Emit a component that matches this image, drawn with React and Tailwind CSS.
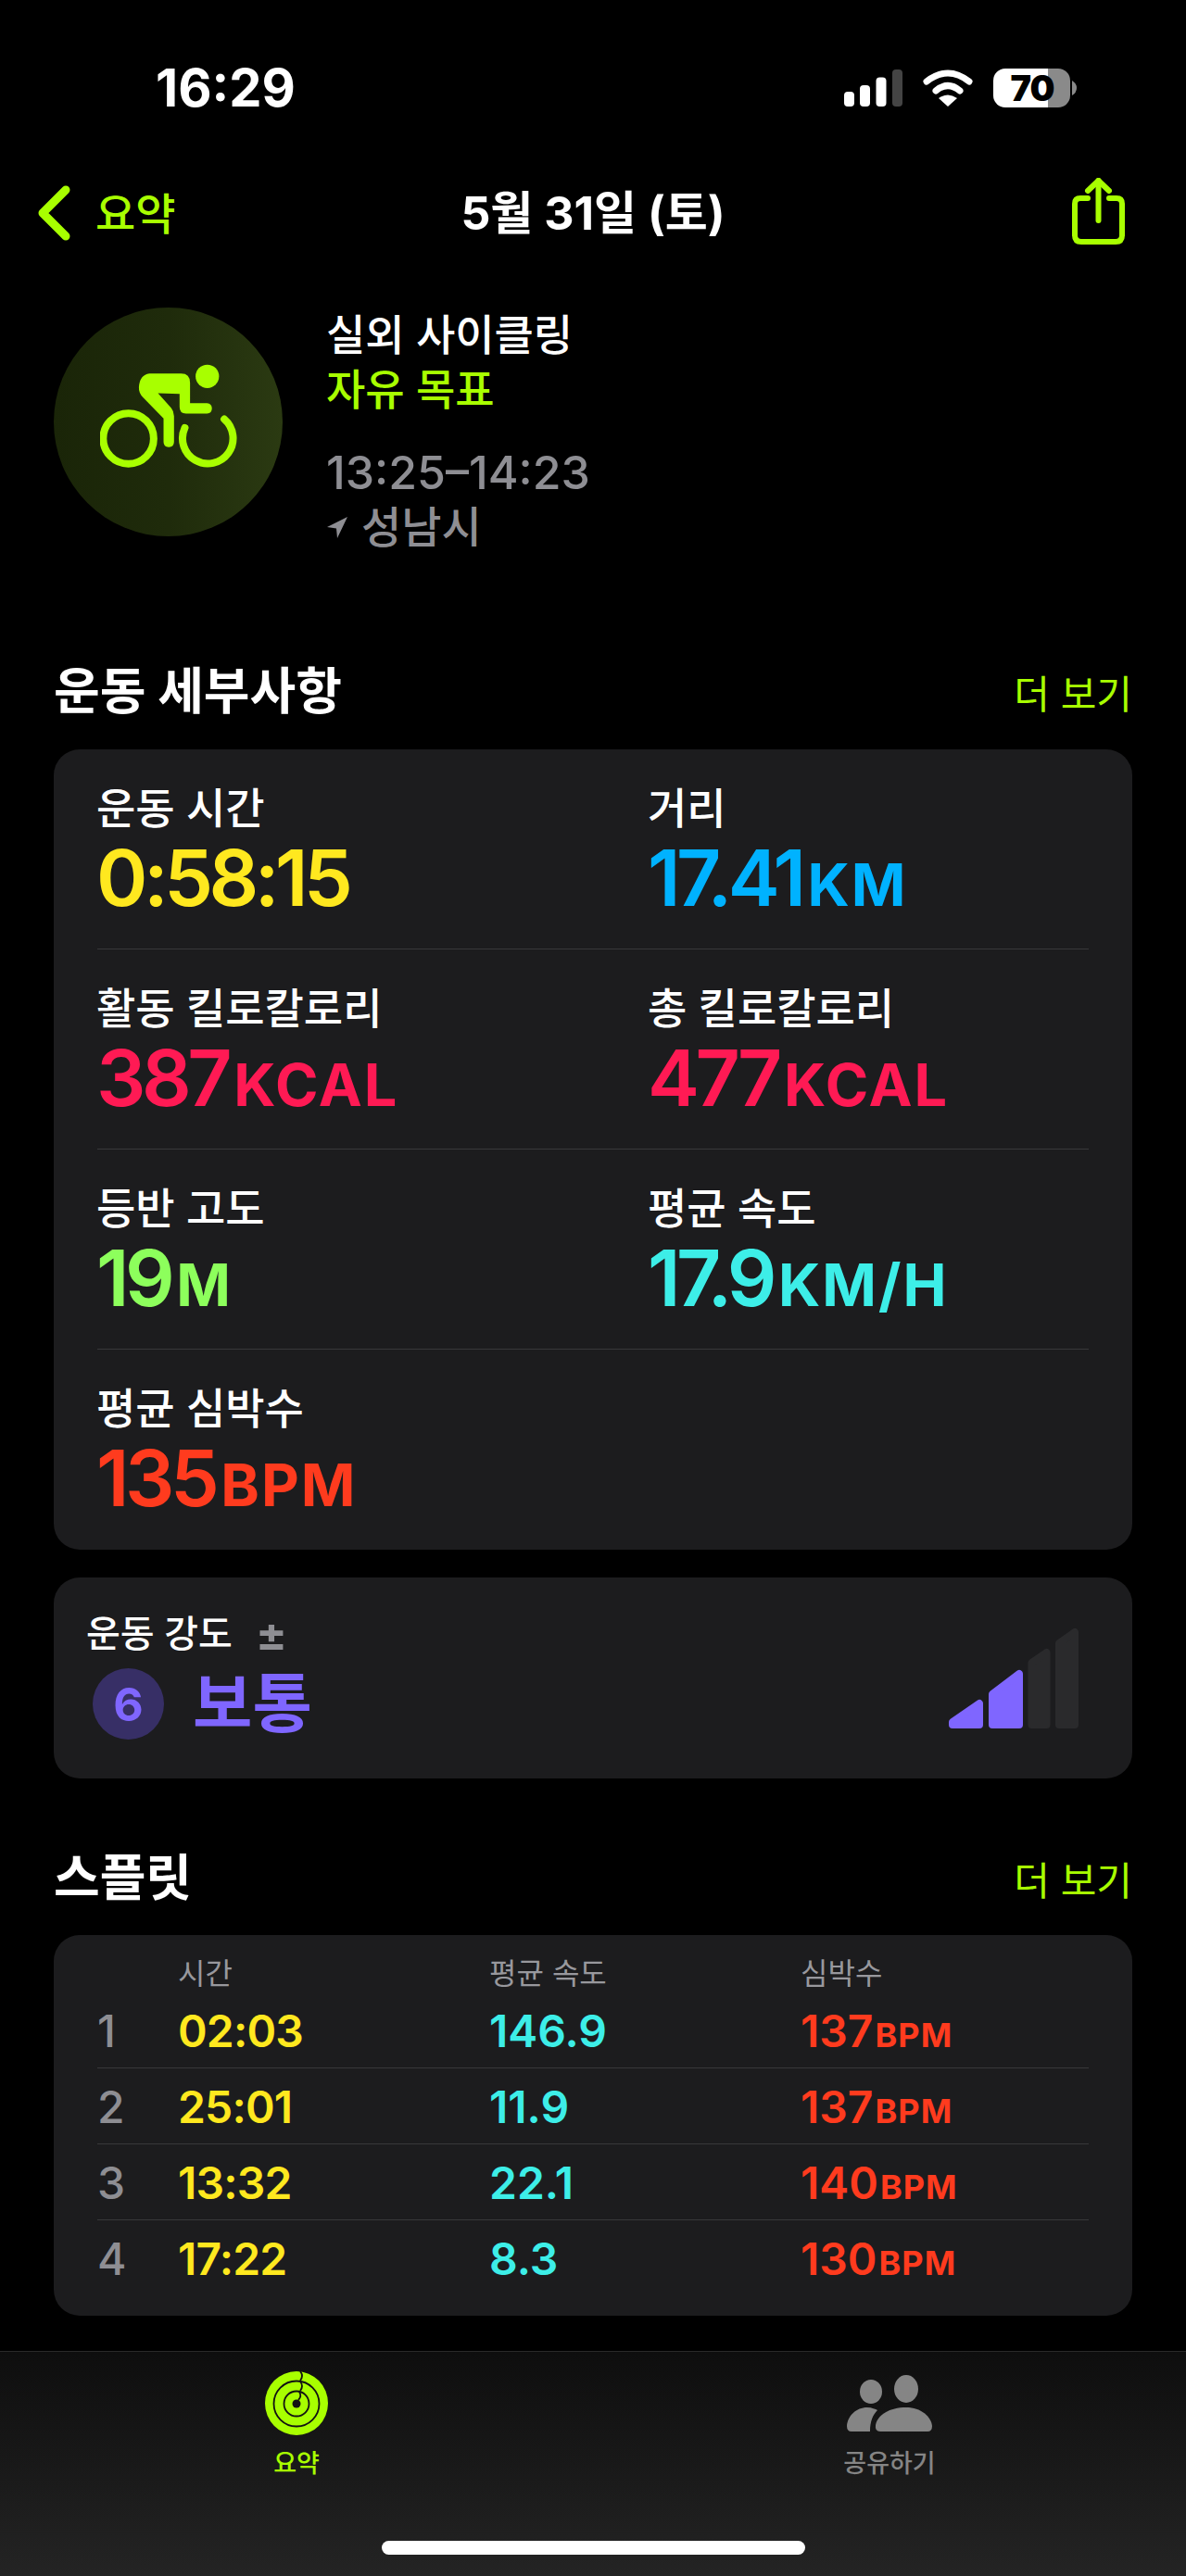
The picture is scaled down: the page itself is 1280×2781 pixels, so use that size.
import React from "react";

const LIME = "text-[#a8ff00]";

const rows = [
  [
    { label: "운동 시간", value: "0:58:15", unit: "", color: "text-[#ffe81f]" },
    { label: "거리", value: "17.41", unit: "KM", color: "text-[#00b2ff]" },
  ],
  [
    { label: "활동 킬로칼로리", value: "387", unit: "KCAL", color: "text-[#ff1a54]" },
    { label: "총 킬로칼로리", value: "477", unit: "KCAL", color: "text-[#ff1a54]" },
  ],
  [
    { label: "등반 고도", value: "19", unit: "M", color: "text-[#8dff5c]" },
    { label: "평균 속도", value: "17.9", unit: "KM/H", color: "text-[#3deee8]" },
  ],
  [{ label: "평균 심박수", value: "135", unit: "BPM", color: "text-[#ff3b1e]" }],
];

const splits = [
  ["1", "02:03", "146.9", "137"],
  ["2", "25:01", "11.9", "137"],
  ["3", "13:32", "22.1", "140"],
  ["4", "17:22", "8.3", "130"],
];

const Signal = () => (
  <svg width="63" height="40" viewBox="0 0 63 40">
    <rect x="0" y="24" width="11" height="16" rx="4" fill="#fff" />
    <rect x="17" y="17" width="11" height="23" rx="4" fill="#fff" />
    <rect x="34.5" y="8.5" width="11" height="31.5" rx="4" fill="#fff" />
    <rect x="52" y="0" width="11" height="40" rx="4" fill="#444" />
  </svg>
);

const Wifi = () => (
  <svg width="54" height="40" viewBox="0 0 54 40">
    <path d="M4 13 Q27 -5 50 13" fill="none" stroke="#fff" strokeWidth="7" strokeLinecap="round" />
    <path d="M14 23 Q27 12 40 23" fill="none" stroke="#fff" strokeWidth="7" strokeLinecap="round" />
    <path d="M27 40 L17 31 Q27 24 37 31 Z" fill="#fff" />
  </svg>
);

const Battery = () => (
  <div className="flex items-center gap-[2px]">
    <div className="relative w-[83px] h-[42px] rounded-[13px] bg-[linear-gradient(to_right,#fff_59px,#8a8a8a_59px)]">
      <span className="absolute inset-0 flex items-center justify-center pl-[1px] text-[38px] leading-none font-black text-black tracking-[-1px]">
        70
      </span>
    </div>
    <svg width="5" height="16" viewBox="0 0 5 16">
      <path d="M0 0 Q5 3 5 8 Q5 13 0 16 Z" fill="#8a8a8a" />
    </svg>
  </div>
);

const ShareIcon = () => (
  <svg className="mb-[5px]" width="57" height="72" viewBox="0 0 57 72" fill="none" stroke="#a8ff00" strokeWidth="6" strokeLinecap="round" strokeLinejoin="round">
    <path d="M17 22 H9 Q3 22 3 28 V62 Q3 69 10 69 H47 Q54 69 54 62 V28 Q54 22 48 22 H40" />
    <path d="M28.5 46 V3" />
    <path d="M17 14 L28.5 3 L40 14" />
  </svg>
);

const BikeIcon = () => (
  <svg className="w-[148px] h-[125px]" viewBox="205 222 445 374" fill="#a8ff00">
    <circle cx="553" cy="261" r="38" />
    <circle cx="297" cy="463" r="82" fill="none" stroke="#a8ff00" strokeWidth="24" />
    <path d="M480 428 A82 82 0 1 0 608 400" fill="none" stroke="#a8ff00" strokeWidth="24" strokeLinecap="round" />
    <path d="M365 252 L468 252 Q497 252 497 282 L497 348 L552 348 Q568 350 568 365 Q568 382 552 382 L484 382 Q463 382 463 360 L463 318 L393 316 L436 364 Q445 375 445 390 L445 474 Q445 491 428 491 Q411 491 411 474 L411 398 L345 330 Q330 315 331 296 Q334 256 365 252 Z" />
  </svg>
);

const EffortBars = () => (
  <svg className="mt-[21px]" width="140" height="108" viewBox="0 0 140 108" strokeWidth="8" strokeLinejoin="round">
    <path d="M4 101 L33 81 V104 H4 Z" fill="#7f66ff" stroke="#7f66ff" />
    <path d="M47 71 L76 49 V104 H47 Z" fill="#7f66ff" stroke="#7f66ff" />
    <path d="M89.5 37 L105.5 26 V104 H89.5 Z" fill="#2a2a2c" stroke="#2a2a2c" />
    <path d="M119 16 L136 4 V104 H119 Z" fill="#2a2a2c" stroke="#2a2a2c" />
  </svg>
);

const RingsIcon = () => (
  <svg width="68" height="69" viewBox="0 0 68 69">
    <ellipse cx="34" cy="34.5" rx="34" ry="34.5" fill="#a8ff00" />
    <circle cx="34" cy="35" r="24.5" fill="none" stroke="#121212" strokeWidth="1.8" />
    <circle cx="34" cy="35" r="13.5" fill="none" stroke="#121212" strokeWidth="1.8" />
    <circle cx="34" cy="35" r="4.5" fill="#121212" />
    <path d="M38 0 Q42 5 38 10" fill="none" stroke="#121212" strokeWidth="1.8" />
    <path d="M38 11 Q42 16 38 21" fill="none" stroke="#121212" strokeWidth="1.8" />
    <path d="M37 22 Q40 27 36 31" fill="none" stroke="#121212" strokeWidth="1.8" />
  </svg>
);

const PeopleIcon = () => (
  <svg width="92" height="61" viewBox="0 0 92 61" fill="#858585">
    <ellipse cx="26" cy="18" rx="12" ry="13" />
    <ellipse cx="64" cy="15" rx="13" ry="15" />
    <path d="M0 55 C1 44 10 35 22 35 C27 35 31 37 33 38 C28 43 25 50 25 61 H5 Q0 61 0 55 Z" />
    <path d="M36 61 Q30 61 31 54 C33 43 46 35 64 35 C80 35 91 45 92 55 Q92 61 87 61 Z" />
  </svg>
);

const SectionHeader = ({ title }) => (
  <div className="mx-[58px] h-[60px] flex items-center justify-between">
    <h2 className="text-[54px] leading-none font-bold text-white">{title}</h2>
    <span className={`text-[42px] leading-none pt-[6px] ${LIME}`}>더 보기</span>
  </div>
);

const Stat = ({ stat }) => (
  <div className="-ml-[1px]">
    <div className="text-[46px] h-[56px] leading-[56px] font-medium text-white">{stat.label}</div>
    <div className={`mt-[4px] h-[88px] leading-[88px] font-semibold whitespace-nowrap ${stat.color}`}>
      <span className="text-[84px] tracking-[-4.5px]">{stat.value}</span>
      {stat.unit && <span className="text-[63px] font-bold tracking-[2px] ml-[6px]">{stat.unit}</span>}
    </div>
  </div>
);

export default function App() {
  return (
    <div
      className="w-full h-[2781px] overflow-hidden bg-black text-white"
      style={{ fontFamily: 'Inter, "Noto Sans CJK KR", sans-serif' }}
    >
      {/* status bar */}
      <div className="h-[190px] flex items-center justify-between pl-[168px] pr-[118px]">
        <span className="text-[56px] leading-none font-bold">16:29</span>
        <div className="flex items-center gap-[22px]">
          <Signal />
          <Wifi />
          <Battery />
        </div>
      </div>

      {/* nav */}
      <div className="h-[80px] grid grid-cols-3 items-center">
        <div className={`flex items-center gap-[27px] pl-[40px] ${LIME}`}>
          <svg width="36" height="60" viewBox="0 0 36 60" fill="none" stroke="#a8ff00" strokeWidth="9" strokeLinecap="round" strokeLinejoin="round">
            <path d="M31 5 L6 30 L31 55" />
          </svg>
          <span className="text-[47px] leading-none font-medium">요약</span>
        </div>
        <div className="text-center text-[50px] leading-none font-bold whitespace-nowrap">5월 31일 (토)</div>
        <div className="flex justify-end pr-[66px]">
          <ShareIcon />
        </div>
      </div>

      {/* workout summary */}
      <div className="mt-[62px] flex px-[58px] gap-[47px]">
        <div className="w-[247px] h-[247px] rounded-full flex items-center justify-center bg-linear-to-r from-[#1a2508] via-[#1f2b0b] to-[#2b3a12]">
          <BikeIcon />
        </div>
        <div>
          <div className="h-[58px] leading-[58px] text-[46px] font-medium">실외 사이클링</div>
          <div className={`h-[60px] leading-[60px] text-[46px] font-medium ${LIME}`}>자유 목표</div>
          <div className="mt-[30px] h-[60px] leading-[60px] text-[50px] font-medium text-[#8e8e93]">13:25–14:23</div>
          <div className="h-[58px] flex items-center gap-[8px] text-[47px] font-medium text-[#8e8e93]">
            <svg width="24" height="24" viewBox="0 0 24 24" fill="#8e8e93">
              <path d="M23 1 L1 12 L11 13.5 L12 24 Z" />
            </svg>
            <span className="ml-[6px]">성남시</span>
          </div>
        </div>
      </div>

      {/* workout details */}
      <div className="mt-[119px]">
        <SectionHeader title="운동 세부사항" />
      </div>
      <div className="mt-[32px] mx-[58px] h-[864px] rounded-[28px] bg-[#1c1c1e] px-[47px]">
        {rows.map((row, i) => (
          <div key={i} className={`grid grid-cols-[595px_1fr] pt-[35px] h-[216px] ${i < 3 ? "border-b border-[#38383a]" : ""}`}>
            {row.map((stat) => (
              <Stat key={stat.label} stat={stat} />
            ))}
          </div>
        ))}
      </div>

      {/* effort */}
      <div className="mt-[30px] mx-[58px] h-[217px] rounded-[28px] bg-[#1c1c1e] pl-[35px] pr-[58px] pt-[34px] flex justify-between items-start">
        <div>
          <div className="h-[54px] flex items-center gap-[25px] text-[40px] font-medium">
            <span>운동 강도</span>
            <span className="text-[50px] leading-none font-bold text-[#8e8e93]">±</span>
          </div>
          <div className="mt-[10px] ml-[7px] flex items-center gap-[31px]">
            <div className="w-[77px] h-[77px] rounded-full bg-[#372f66] flex items-center justify-center text-[50px] leading-none font-bold text-[#7f66ff]">6</div>
            <span className="text-[70px] leading-none font-semibold text-[#7f66ff]">보통</span>
          </div>
        </div>
        <EffortBars />
      </div>

      {/* splits */}
      <div className="mt-[78px]">
        <SectionHeader title="스플릿" />
      </div>
      <div className="mt-[31px] mx-[58px] h-[411px] rounded-[28px] bg-[#1c1c1e] px-[47px] pt-[18px]">
        <div className="grid grid-cols-[87px_336px_336px_1fr] h-[44px] items-center text-[32px] text-[#98989d]">
          <span />
          <span>시간</span>
          <span>평균 속도</span>
          <span>심박수</span>
        </div>
        {splits.map((s, i) => (
          <div key={s[0]} className={`grid grid-cols-[87px_336px_336px_1fr] h-[82px] items-center pt-[2px] ${i < 3 ? "border-b border-[#38383a]" : ""}`}>
            <span className="text-[48px] font-medium text-[#8e8e93]">{s[0]}</span>
            <span className="text-[48px] font-semibold tracking-[-0.8px] text-[#ffe81f]">{s[1]}</span>
            <span className="text-[48px] font-semibold text-[#3deee8]">{s[2]}</span>
            <span className="font-semibold text-[#ff3b1e] whitespace-nowrap">
              <span className="text-[48px]">{s[3]}</span>
              <span className="text-[36px] font-bold tracking-[1px] ml-[2px]">BPM</span>
            </span>
          </div>
        ))}
      </div>

      {/* tab bar */}
      <div className="mt-[38px] h-[243px] border-t border-[#2a2a2a] bg-linear-to-b from-[#0e0e0e] to-[#242424] pt-[21px]">
        <div className="grid grid-cols-2">
          <div className="flex flex-col items-center">
            <div className="h-[69px] flex items-center"><RingsIcon /></div>
            <span className={`mt-[11px] h-[40px] leading-[40px] text-[27px] font-medium ${LIME}`}>요약</span>
          </div>
          <div className="flex flex-col items-center">
            <div className="h-[69px] flex items-center"><PeopleIcon /></div>
            <span className="mt-[11px] h-[40px] leading-[40px] text-[27px] font-medium text-[#858585]">공유하기</span>
          </div>
        </div>
        <div className="mt-[63px] mx-auto w-[457px] h-[15px] rounded-full bg-white" />
      </div>
    </div>
  );
}
